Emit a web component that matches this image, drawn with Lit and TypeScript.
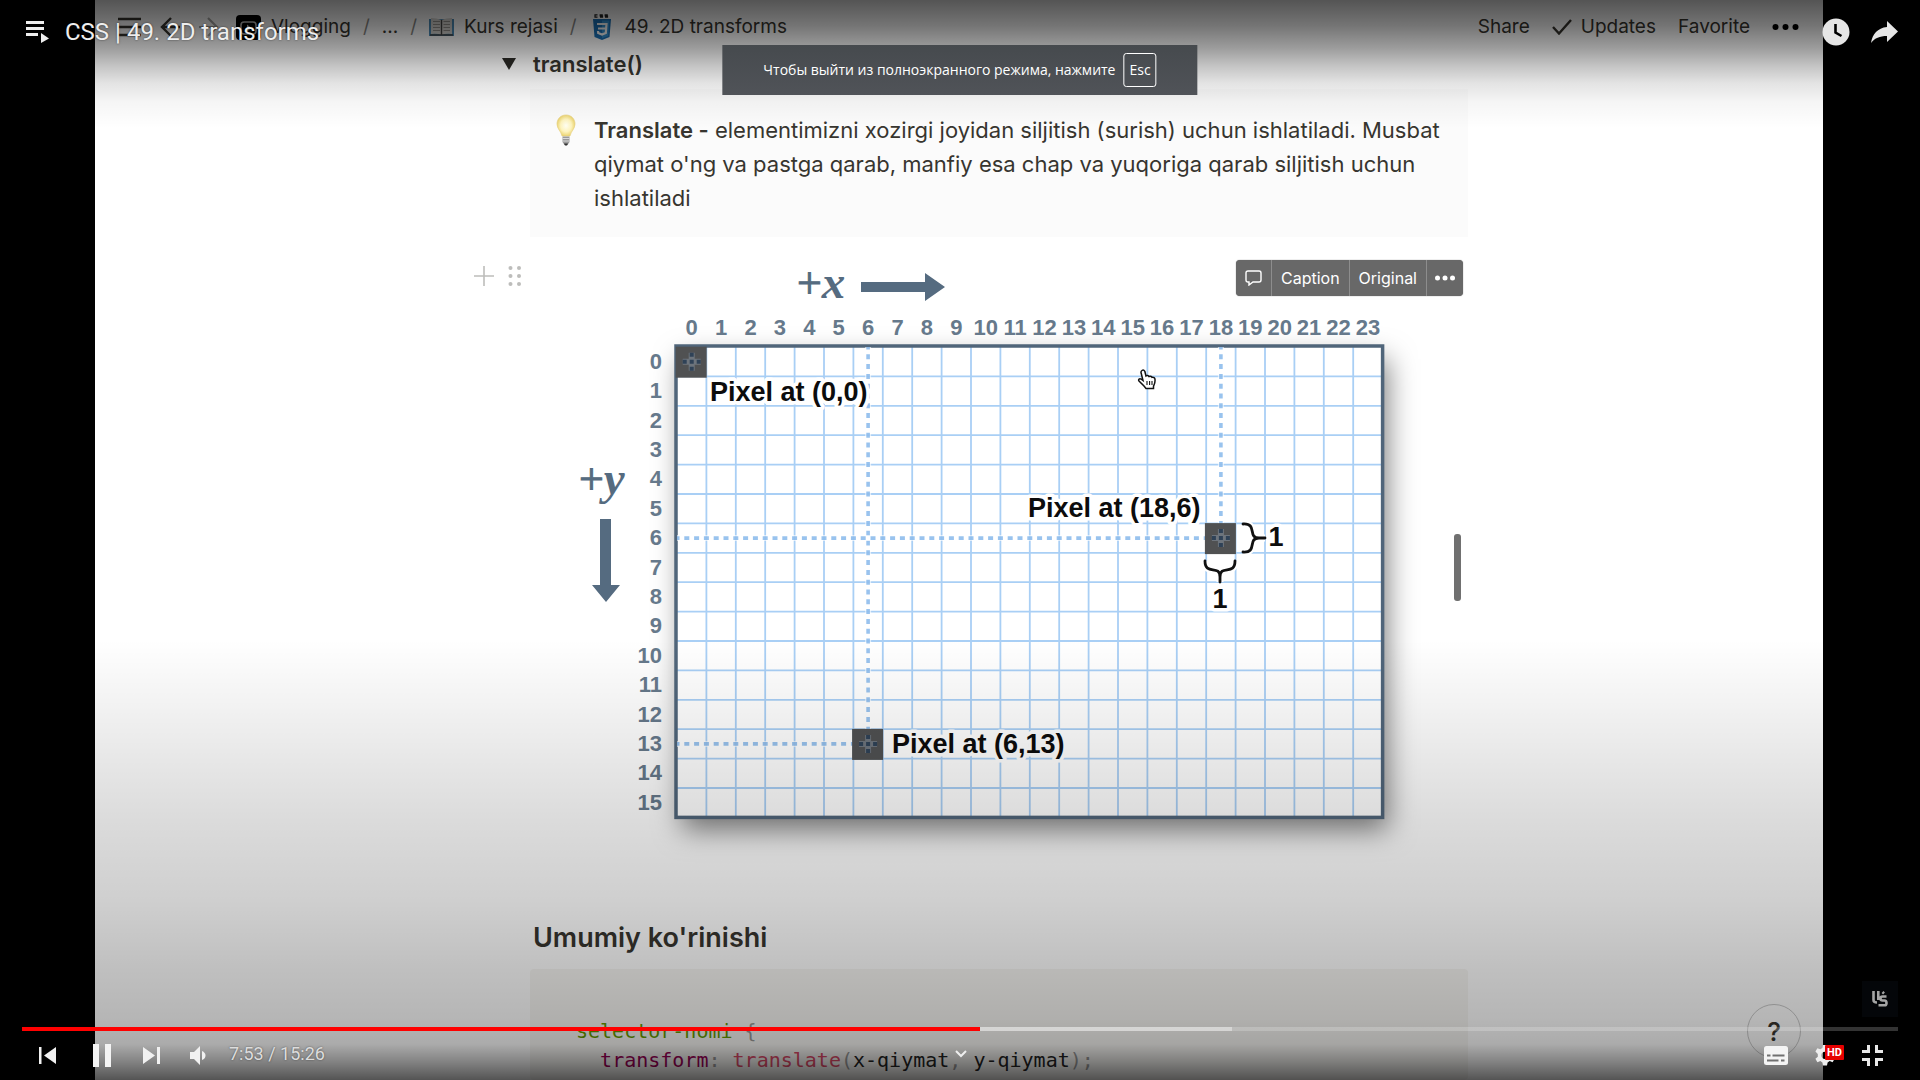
import { LitElement, html, svg, css } from "lit";
import { customElement, property, state } from "lit/decorators.js";

const CELL = 29.4;
const LEFT = 147;
const TOP = 100;
const COLS = 24;
const ROWS = 16;
const range = (n: number) => Array.from({ length: n }, (_, i) => i);
const midX = (col: number) => LEFT + (col + 0.5) * CELL;
const midY = (row: number) => TOP + (row + 0.5) * CELL;

@customElement("coordinate-grid")
export class CoordinateGrid extends LitElement {
  static styles = css`
    :host { display: block; }
    .chart { display: block; width: 100%; height: auto; overflow: visible; }
    .sheet { fill: #fff; filter: drop-shadow(5px 12px 14px rgba(0, 0, 0, 0.5)); }
    .frame { fill: none; stroke: #50657a; stroke-width: 3.5; }
    .rule { stroke: #a9cff5; stroke-width: 1.8; }
    .guide-halo { stroke: #fff; stroke-width: 6; stroke-opacity: 0.6; }
    .guide { stroke: #7fb4ea; stroke-width: 3.6; stroke-opacity: 0.8; stroke-dasharray: 5 4.8; stroke-dashoffset: 2.5; }
    .pixel { fill: #505152; }
    .cross { fill: none; stroke: #2f4257; stroke-width: 4; stroke-dasharray: 4 3; }
    .cross-edge { fill: none; stroke: #8a97a5; stroke-width: 6; stroke-opacity: 0.5; }
    .tick { font: bold 22px "Liberation Sans", Arial, sans-serif; fill: #66798b; }
    .axis { font: 44px "Liberation Serif", serif; fill: #556b80; stroke: #556b80; stroke-width: 1; }
    .var { font: italic bold 47px "Liberation Serif", serif; stroke: none; }
    .arrow { fill: #556b80; }
    .label {
      font: bold 27px "Liberation Sans", Arial, sans-serif;
      fill: #0c0c0c; stroke: #fff; stroke-width: 7; stroke-linejoin: round; paint-order: stroke;
    }
    .brace { fill: none; stroke: #111; stroke-width: 2.8; stroke-linecap: round; }
    .brace-halo { fill: none; stroke: #fff; stroke-width: 7; }
  `;

  private pixel(col: number, row: number) {
    const x = midX(col);
    const y = midY(row);
    const arms = `M${x - 9} ${y}H${x + 9}M${x} ${y - 9}V${y + 9}`;
    return svg`
      <rect class="pixel" x=${x - 16} y=${y - 15} width="31" height="31"></rect>
      <path class="cross-edge" d=${arms}></path>
      <path class="cross" d=${arms}></path>`;
  }

  private guide(x1: number, y1: number, x2: number, y2: number) {
    return svg`
      <line class="guide-halo" x1=${x1} y1=${y1} x2=${x2} y2=${y2}></line>
      <line class="guide" x1=${x1} y1=${y1} x2=${x2} y2=${y2}></line>`;
  }

  render() {
    const w = COLS * CELL;
    const h = ROWS * CELL;
    const braceRight = "M713 277C728 276 717 291 729 291H735M713 305C728 306 717 291 729 291";
    const braceDown = "M675 314C675 329 690 317 690 330V335M705 314C705 329 690 317 690 330";
    return html`
      <svg class="chart" viewBox="0 0 938 660" role="img" aria-label="+x +y">
        <rect class="sheet" x=${LEFT} y=${TOP} width=${w} height=${h}></rect>
        ${range(COLS - 1).map((i) => {
          const x = LEFT + (i + 1) * CELL;
          return svg`<line class="rule" x1=${x} y1=${TOP} x2=${x} y2=${TOP + h}></line>`;
        })}
        ${range(ROWS - 1).map((i) => {
          const y = TOP + (i + 1) * CELL;
          return svg`<line class="rule" x1=${LEFT} y1=${y} x2=${LEFT + w} y2=${y}></line>`;
        })}
        <rect class="frame" x=${LEFT - 1} y=${TOP - 1} width=${w + 1} height=${h + 1}></rect>
        ${this.guide(midX(6), TOP, midX(6), midY(13))}
        ${this.guide(LEFT, midY(13), midX(6), midY(13))}
        ${this.guide(midX(18), TOP, midX(18), midY(6))}
        ${this.guide(LEFT, midY(6), midX(18), midY(6))}
        ${this.pixel(0, 0)} ${this.pixel(18, 6)} ${this.pixel(6, 13)}
        ${range(COLS).map((i) => svg`<text class="tick" text-anchor="middle" x=${midX(i)} y="88">${i}</text>`)}
        ${range(ROWS).map((i) => svg`<text class="tick" text-anchor="end" x="132" y=${midY(i) + 7}>${i}</text>`)}
        <text class="axis" x="267" y="51">+<tspan class="var">x</tspan></text>
        <path class="arrow" d="M331 35H395V26L415 40L395 54V45H331Z"></path>
        <text class="axis" x="49" y="247">+<tspan class="var">y</tspan></text>
        <path class="arrow" d="M70 272H81V338H90L76 355L62 338H70Z"></path>
        <text class="label" x="180" y="154">Pixel at (0,0)</text>
        <text class="label" x="498" y="270">Pixel at (18,6)</text>
        <text class="label" x="362" y="506">Pixel at (6,13)</text>
        <path class="brace-halo" d=${braceRight}></path>
        <path class="brace" d=${braceRight}></path>
        <path class="brace-halo" d=${braceDown}></path>
        <path class="brace" d=${braceDown}></path>
        <text class="label" text-anchor="middle" x="746" y="299">1</text>
        <text class="label" text-anchor="middle" x="690" y="361">1</text>
      </svg>`;
  }
}

@customElement("lesson-page")
export class LessonPage extends LitElement {
  static styles = css`
    :host {
      display: flex; flex-direction: column; position: relative; height: 100%; overflow: hidden;
      background: #fff; color: #37352f; font-family: Inter, "Liberation Sans", sans-serif;
    }
    * { box-sizing: border-box; }
    button { font: inherit; color: inherit; background: none; border: 0; padding: 0; display: flex; align-items: center; }
    a { color: inherit; text-decoration: none; display: flex; align-items: center; gap: 10px; }
    svg { display: block; flex: none; }
    .top {
      display: flex; flex: none; justify-content: space-between; align-items: center;
      height: 48px; padding: 6px 24px 0 23px; font-size: 19px; line-height: 24px; white-space: nowrap;
    }
    .crumbs, .tools { display: flex; align-items: center; }
    .nav { display: flex; align-items: center; gap: 19px; margin-right: 5px; }
    .crumbs { gap: 12px; }
    .slash { color: #8a8986; }
    .tools { gap: 22px; }
    .tools button { gap: 9px; }
    .row { display: grid; flex: none; grid-template-columns: 435fr 938fr 355fr; }
    .gutter { display: flex; justify-content: flex-end; align-items: flex-start; }
    .toggle { align-items: center; height: 32px; margin-bottom: 9px; }
    .toggle .gutter { padding-right: 14px; }
    h2, h3, p, pre { margin: 0; }
    h3 { font-size: 22px; line-height: 32px; font-weight: 600; padding-left: 3px; }
    h2 { font-size: 27px; line-height: 36px; font-weight: 600; padding-left: 3px; }
    .callout { display: flex; gap: 18px; padding: 24px 16px 24px 26px; height: 148px; background: #fbfbfb; }
    .callout p { font-size: 22px; line-height: 34px; }
    .callout b { font-weight: 600; }
    .figure { margin-top: 10px; }
    .figure .gutter { padding: 19px 8px 0 0; gap: 14px; }
    .canvas { position: relative; }
    .bar {
      position: absolute; top: 13px; right: 5px; display: flex; height: 36px;
      background: #686868; color: #fff; border-radius: 4px; font-size: 16px; box-shadow: 0 0 1px #555;
    }
    .bar button { padding: 0 9px; }
    .bar button:last-child { padding: 0 8px; }
    .bar button + button { border-left: 1px solid #8d8d8d; }
    .pointer { position: absolute; left: 607px; top: 122px; }
    .thumb { position: absolute; right: 7px; top: 287px; width: 7px; height: 67px; border-radius: 3px; background: #707070; }
    .section { padding: 13px 0; }
    .row.code { flex: 1 1 0; min-height: 0; }
    pre {
      min-height: 100%; background: #f7f6f3; border-radius: 4px; padding: 48px 46px 0;
      font: 20px/29px "DejaVu Sans Mono", "Liberation Mono", monospace; color: #222;
    }
    .sel { color: #690; }
    .prop { color: #905; }
    .fn { color: #dd4a68; }
    .punc { color: #999; }
    .help {
      position: absolute; right: 22px; bottom: 22px; width: 54px; height: 54px; justify-content: center;
      border: 1px solid #c8c8c8; border-radius: 50%; font-size: 26px; font-weight: 500;
    }
  `;

  render() {
    return html`
      <header class="top">
        <div class="crumbs">
          <nav class="nav">
            <button aria-label="Menu"><svg width="23" height="20" stroke="#37352f" stroke-width="2.4"><path d="M0 2H23M0 10H23M0 18H23"></path></svg></button>
            <button aria-label="Back"><svg width="20" height="20" fill="none" stroke="#37352f" stroke-width="2.4"><path d="M20 10H2M11 1L2 10L11 19"></path></svg></button>
            <button aria-label="Forward"><svg width="20" height="20" fill="none" stroke="#a9a8a5" stroke-width="2.2"><path d="M0 10H18M9 1L18 10L9 19"></path></svg></button>
          </nav>
          <a href="#vlogging">
            <svg width="25" height="25"><rect width="25" height="25" rx="4"></rect><rect x="5" y="7" width="15" height="12" rx="3" fill="none" stroke="#bbb" stroke-width="1.6"></rect><path d="M11 9.500L15.500 13L11 16.500Z" fill="#ccc"></path></svg>
            Vlogging</a>
          <span class="slash">/</span>
          <a href="#more">...</a>
          <span class="slash">/</span>
          <a href="#kurs">
            <svg width="25" height="19"><path d="M0 1H25V18H0Z" fill="#4d8db8"></path><path d="M2 0Q8 0 12.500 2Q17 0 23 0V16Q17 15 12.500 17Q8 15 2 16Z" fill="#d6d4d0"></path><path d="M12.500 2V17M1 17H24" stroke="#444" stroke-width="1.400"></path><path d="M4 3.500H11M4 6.500H11M4 9.500H11M4 12.500H11M14.500 3.500H21M14.500 6.500H21M14.500 9.500H21M14.500 12.500H21" stroke="#96938e"></path></svg>
            Kurs rejasi</a>
          <span class="slash">/</span>
          <a href="#transforms">
            <svg width="26" height="26"><path d="M8.500 0.800H6V3.200H8.500M13.800 0.800H11.200V2H13.500V3.200H11M18.800 0.800H16.200V2H18.500V3.200H16" fill="none" stroke="#222" stroke-width="1.200"></path><path d="M4 5H22L20.500 23L13 26L5.500 23Z" fill="#1b73ba"></path><path d="M13 6.500H20.400L19.200 22L13 24.300Z" fill="#3595d6"></path><path d="M8 10H17.500L16.800 19L13 20.600L9.200 19L9 17M9 14.500H17" fill="none" stroke="#fff" stroke-width="2.200"></path></svg>
            49. 2D transforms</a>
        </div>
        <div class="tools">
          <button>Share</button>
          <button><svg width="20" height="16" fill="none" stroke="#37352f" stroke-width="2.4"><path d="M1 8L7 14.500L19 1"></path></svg>Updates</button>
          <button>Favorite</button>
          <button aria-label="More"><svg width="27" height="8"><circle cx="3.500" cy="4" r="3"></circle><circle cx="13.500" cy="4" r="3"></circle><circle cx="23.500" cy="4" r="3"></circle></svg></button>
        </div>
      </header>

      <div class="row toggle">
        <div class="gutter"><button aria-label="Toggle"><svg width="14" height="12"><path d="M0 0H14L7 12Z" fill="#2c2b27"></path></svg></button></div>
        <h3>translate()</h3>
      </div>

      <div class="row">
        <div></div>
        <div class="callout">
          <svg width="20" height="34" viewBox="0 0 20 34">
            <defs><radialGradient id="glow"><stop offset="0" stop-color="#fffef2"></stop><stop offset="0.6" stop-color="#fdf3bd"></stop><stop offset="1" stop-color="#ecd573"></stop></radialGradient></defs>
            <path d="M10 2C4.500 2 1 6 1 11C1 16 5 18 6 23H14C15 18 19 16 19 11C19 6 15.500 2 10 2Z" fill="url(#glow)" stroke="#e6d182" stroke-width="0.700"></path>
            <path d="M6.500 23.500H13.500V29L11.500 32H8.500L6.500 29Z" fill="#9a9a9a"></path><path d="M6.500 25.500H13.500M6.500 28H13.500" stroke="#d8d8d8"></path><path d="M8 30.500H12L11 32.500H9Z" fill="#333"></path>
          </svg>
          <p><b>Translate -</b> elementimizni xozirgi joyidan siljitish (surish) uchun ishlatiladi. Musbat qiymat o'ng va pastga qarab, manfiy esa chap va yuqoriga qarab siljitish uchun ishlatiladi</p>
        </div>
      </div>

      <div class="row figure">
        <div class="gutter">
          <button aria-label="Add block"><svg width="20" height="20" stroke="#bdbdbb" stroke-width="1.600"><path d="M10 0V20M0 10H20"></path></svg></button>
          <button aria-label="Drag block"><svg width="14" height="20" fill="#bdbdbb"><circle cx="2.500" cy="2" r="2"></circle><circle cx="11" cy="2" r="2"></circle><circle cx="2.500" cy="10" r="2"></circle><circle cx="11" cy="10" r="2"></circle><circle cx="2.500" cy="18" r="2"></circle><circle cx="11" cy="18" r="2"></circle></svg></button>
        </div>
        <div class="canvas">
          <coordinate-grid></coordinate-grid>
          <div class="bar">
            <button aria-label="Comment"><svg width="17" height="16" fill="none" stroke="#fff" stroke-width="1.400"><path d="M3 1H14Q16 1 16 3V10Q16 12 14 12H8L4 15V12H3Q1 12 1 10V3Q1 1 3 1Z"></path></svg></button>
            <button>Caption</button>
            <button>Original</button>
            <button aria-label="More"><svg width="20" height="6" fill="#fff"><circle cx="2.500" cy="3" r="2.500"></circle><circle cx="10" cy="3" r="2.500"></circle><circle cx="17.500" cy="3" r="2.500"></circle></svg></button>
          </div>
          <svg class="pointer" width="20" height="21" viewBox="0 0 20 21"><path d="M5 1.500C6.500 0.500 7.800 1.500 8 3L9 7C10 6.300 11.300 6.500 12 7.500C13 7 14.300 7.300 15 8.300C16.500 8 18 9 18 10.500C18.300 14 17.500 15 16.500 17V19.500H9L7 17L2 12C1 10.500 2.500 9 4.200 10.200L6 11.500L4 3.500C3.900 2.700 4.300 2 5 1.500Z" fill="#fff" stroke="#111" stroke-width="1.500"></path><path d="M10 12V16M12.600 12V16M15 12V16" stroke="#111" stroke-width="1.100"></path></svg>
          <div class="thumb"></div>
        </div>
      </div>

      <div class="row section"><div></div><h2>Umumiy ko'rinishi</h2></div>

      <div class="row code">
        <div></div>
        <pre><span class="sel">selector-nomi</span> <span class="punc">{</span>
  <span class="prop">transform</span><span class="punc">:</span> <span class="fn">translate</span><span class="punc">(</span>x-qiymat<span class="punc">,</span> y-qiymat<span class="punc">);</span>
<span class="punc">}</span></pre>
      </div>
      <button class="help">?</button>`;
  }
}

@customElement("player-chrome")
export class PlayerChrome extends LitElement {
  @property({ type: Number }) played = 51.07;
  @property({ type: Number }) loaded = 64.5;

  static styles = css`
    :host {
      display: flex; flex-direction: column; justify-content: space-between; color: #eee;
      font-family: Roboto, "Liberation Sans", sans-serif;
      background:
        linear-gradient(to bottom, rgba(0,0,0,.67) 0, rgba(0,0,0,.54) 26px, rgba(0,0,0,.39) 48px, rgba(0,0,0,.23) 66px, rgba(0,0,0,.11) 83px, rgba(0,0,0,.04) 102px, rgba(0,0,0,0) 128px),
        linear-gradient(to top, rgba(0,0,0,.67) 0, rgba(0,0,0,.49) 18px, rgba(0,0,0,.33) 36px, rgba(0,0,0,.29) 60px, rgba(0,0,0,.25) 110px, rgba(0,0,0,.19) 180px, rgba(0,0,0,.14) 260px, rgba(0,0,0,.07) 350px, rgba(0,0,0,0) 440px);
    }
    * { box-sizing: border-box; }
    button { font: inherit; color: inherit; background: none; border: 0; padding: 0; display: flex; }
    svg { display: block; flex: none; }
    .head { display: flex; align-items: center; height: 64px; padding: 0 22px 0 26px; }
    h1 { flex: 1; margin: 0 0 0 16px; font-size: 24px; line-height: 32px; font-weight: 400; text-shadow: 0 0 2px rgba(0, 0, 0, 0.6); }
    .actions { display: flex; align-items: center; gap: 21px; }
    .foot { padding: 0 22px; }
    .mark { display: flex; align-items: center; justify-content: center; width: 36px; height: 36px; margin-left: auto; background: #040609; }
    .seek {
      appearance: none; display: block; width: 100%; height: 4px; margin: 10px 0 0; border: 0; outline: 0;
      background: linear-gradient(to right, #f00 var(--played), rgba(255,255,255,.5) var(--played), rgba(255,255,255,.5) var(--loaded), rgba(255,255,255,.2) var(--loaded));
    }
    .seek::-webkit-slider-thumb { appearance: none; width: 0; height: 0; }
    .controls { display: grid; grid-template-columns: 1fr auto 1fr; align-items: center; height: 49px; padding: 0 15px 0 17px; }
    .left { display: flex; align-items: center; }
    .left button { margin-right: 30px; }
    .left .volume { margin-right: 23px; }
    .time { padding-bottom: 3px; font-size: 18px; line-height: 20px; color: #ddd; text-shadow: 0 0 2px rgba(0, 0, 0, 0.5); }
    .right { display: flex; align-items: center; justify-content: flex-end; gap: 27px; }
    .gear { position: relative; }
    .hd {
      position: absolute; left: 10px; top: 0; background: #e60000; color: #fff; border-radius: 1px;
      padding: 0 2px; font-size: 11px; line-height: 15px; font-weight: 700;
    }
  `;

  render() {
    return html`
      <div class="head">
        <button aria-label="Playlist"><svg width="23" height="24" fill="#eee"><path d="M0 1H18V4H0ZM0 7H18V10H0ZM0 13H12V16H0ZM15 13L23 18.500L15 23Z"></path></svg></button>
        <h1>CSS | 49. 2D transforms</h1>
        <div class="actions">
          <button aria-label="Watch later"><svg width="28" height="28"><circle cx="14" cy="14" r="13.500" fill="#e6e6e6"></circle><path d="M13.500 6V14.500L19.500 18" fill="none" stroke="#000" stroke-width="2.600"></path></svg></button>
          <button aria-label="Share"><svg width="27" height="22" fill="#e6e6e6"><path d="M16 0L27 10.500L16 21V15C8.500 15 4 17 0 22C1.500 13 6.500 7 16 6Z"></path></svg></button>
        </div>
      </div>
      <div class="foot">
        <div class="mark"><svg width="16" height="16" fill="none" stroke="#a5a5a5" stroke-width="2.600"><path d="M1.500 0V9Q1.500 11.500 5 11.500M6.300 0V9M14.500 5.500H10.500Q8.500 5.500 8.500 7.500T10.500 9.500H12.500Q14.500 9.500 14.500 12T12.500 14.200H6.500M10.500 1L12 2.500"></path></svg></div>
        <input class="seek" type="range" aria-label="Seek" min="0" max="100" step="0.01" .value=${String(this.played)}
          style="--played:${this.played}%;--loaded:${this.loaded}%">
        <div class="controls">
          <div class="left">
            <button aria-label="Previous"><svg width="17" height="18" fill="#f1f1f1"><path d="M0 0H2.500V17H0ZM17 0V17L5 8.500Z"></path></svg></button>
            <button aria-label="Pause"><svg width="27" height="23" fill="#f4f4f4"><path d="M7 0H13V23H7ZM19 0H25V23H19Z"></path></svg></button>
            <button aria-label="Next"><svg width="17" height="18" fill="#f1f1f1"><path d="M0 0L12 8.500L0 17ZM14 0H17V17H14Z"></path></svg></button>
            <button class="volume" aria-label="Mute"><svg width="16" height="20" fill="#f1f1f1"><path d="M0 6H4L10 0V19L4 13H0ZM12 5Q15.500 6.500 15.500 9.500T12 14Z"></path></svg></button>
            <span class="time">7:53 / 15:26</span>
          </div>
          <button aria-label="Details"><svg width="12" height="12" fill="none" stroke="#eee" stroke-width="2"><path d="M1 1L6 6L11 1"></path></svg></button>
          <div class="right">
            <button aria-label="Subtitles"><svg width="24" height="20"><rect width="24" height="19" rx="2.500" fill="#f4f4f4"></rect><path d="M3 9.500H6.500M8.500 9.500H20.500M3 14.500H14.500M17 14.500H20.500" stroke="#707070" stroke-width="2.200"></path></svg></button>
            <button class="gear" aria-label="Settings"><svg width="20" height="21" viewBox="0 0 20 21"><path fill="#eee" fill-rule="evenodd" d="M8 0H12L12.600 3.100L14.700 4.300L17.600 3.200L19.600 6.600L17.200 8.600V11.400L19.600 13.700L17.600 17.200L14.700 16.100L12.600 17.400L12 20.500H8L7.400 17.400L5.300 16.100L2.400 17.200L0.400 13.700L2.800 11.700V8.900L0.400 6.600L2.400 3.200L5.300 4.300L7.400 3.100ZM10 6.700A3.600 3.600 0 1 0 10 13.900A3.600 3.600 0 1 0 10 6.700Z"></path></svg><span class="hd">HD</span></button>
            <button aria-label="Exit full screen"><svg width="21" height="21" fill="#e8e8e8"><path d="M5 0H8V8H0V5H5ZM13 0H16V5H21V8H13ZM0 13H8V21H5V16H0ZM13 13H21V16H16V21H13Z"></path></svg></button>
          </div>
        </div>
      </div>`;
  }
}

@customElement("app-root")
export class AppRoot extends LitElement {
  @state() private played = 51.07;

  static styles = css`
    :host { display: block; background: #000; }
    .stage { position: relative; box-sizing: border-box; height: 100vh; overflow: hidden; padding: 0 97px 0 95px; }
    .chrome { position: absolute; inset: 0; }
    .toast {
      position: absolute; top: 45px; left: 50%; transform: translateX(-50%);
      display: flex; align-items: center; gap: 8px; height: 50px; padding: 0 41px; white-space: nowrap;
      background: linear-gradient(#464a4e, #505358); color: #fff;
      font: 14px/20px "Open Sans", "Noto Sans", sans-serif;
    }
    kbd { font: inherit; border: 1px solid #fff; border-radius: 3px; padding: 6px 5px; }
  `;

  render() {
    return html`
      <div class="stage">
        <lesson-page></lesson-page>
        <player-chrome class="chrome" .played=${this.played}></player-chrome>
        <div class="toast" role="status">Чтобы выйти из полноэкранного режима, нажмите <kbd>Esc</kbd></div>
      </div>`;
  }
}
